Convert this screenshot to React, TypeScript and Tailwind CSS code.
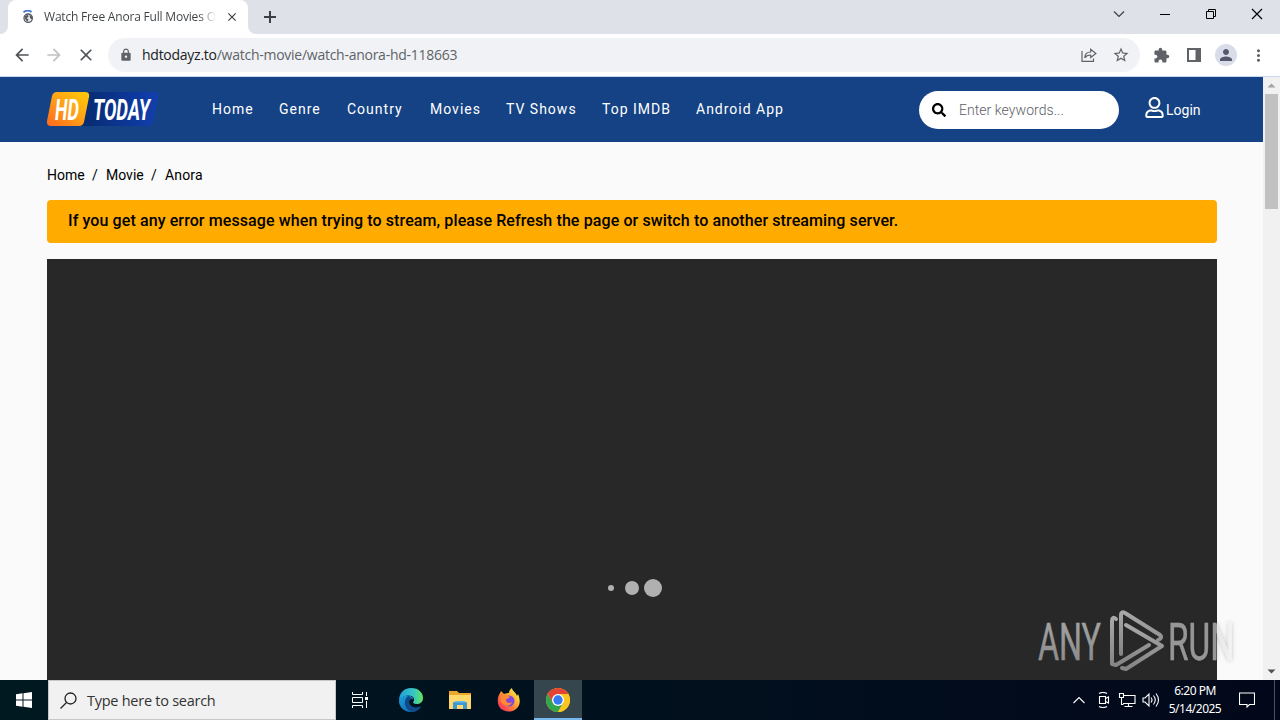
import type { ReactNode } from 'react'
import { FaRegUser, FaSearch } from 'react-icons/fa'
import { MdArrowBack, MdArrowForward, MdClose, MdExtension, MdLock, MdMoreVert, MdPerson, MdStarBorder } from 'react-icons/md'

const NAV_ITEMS = [
  { label: 'Home', width: 'w-[67px]' },
  { label: 'Genre', width: 'w-[68px]' },
  { label: 'Country', width: 'w-[83px]' },
  { label: 'Movies', width: 'w-[76px]' },
  { label: 'TV Shows', width: 'w-[96px]' },
  { label: 'Top IMDB', width: 'w-[94px]' },
  { label: 'Android App', width: 'w-[100px]' }
]

const TabStrip = () => (
  <div className="flex h-[34px] shrink-0 bg-[#dee1e8]">
    <div className="w-2 bg-white">
      <div className="h-full rounded-br-lg bg-[#dee1e8]" />
    </div>
    <div className="flex w-[240px] items-center rounded-t-lg bg-white pl-[14px]">
      <svg className="h-[14px] w-[12px] shrink-0" viewBox="0 0 12 14" fill="none">
        <path d="M1.5 2.2Q6-.8 9.5 2" stroke="#3d73cf" strokeWidth="1.8" />
        <circle cx="6.2" cy="8.2" r="4.2" fill="#e7e9ec" stroke="#565b61" strokeWidth="1.3" />
        <path d="M2.5 6.500l3.500-2 .5 2.500-2 1 2 1.500-1 2.200-2-2zM7.500 5l2.500 1.500v3L8 8z" fill="#565b61" />
      </svg>
      <div className="ml-[10px] w-[172px] bg-gradient-to-r from-[#3c4043] from-90% to-transparent bg-clip-text font-['Open_Sans',sans-serif] text-[12px] leading-[18px] tracking-[-0.190px] whitespace-nowrap text-transparent">
        Watch Free Anora Full Movies O
      </div>
      <MdClose className="ml-[9px] size-[14px] text-[#3c4043]" />
    </div>
    <div className="w-2 bg-white">
      <div className="h-full rounded-bl-lg bg-[#dee1e8]" />
    </div>
    <svg className="mt-[10px] ml-[7px] size-[14px]" viewBox="0 0 14 14" stroke="#3c4043" strokeWidth="2">
      <path d="M7 1v12M1 7h12" />
    </svg>
    <div className="ml-auto flex text-black">
      <svg className="h-[28px] w-[46px]" viewBox="0 0 46 28" fill="none" stroke="#3c4043" strokeWidth="1.2">
        <path d="M18 11.500l5 5 5-5" />
      </svg>
      <svg className="h-[28px] w-[46px]" viewBox="0 0 46 28" stroke="currentColor">
        <path d="M18 14.500h10" />
      </svg>
      <svg className="h-[28px] w-[46px]" viewBox="0 0 46 28" fill="none" stroke="currentColor">
        <path d="M18.500 11.500h7v7h-7zM20.500 11.500v-2h7v7h-2" />
      </svg>
      <svg className="h-[28px] w-[46px]" viewBox="0 0 46 28" fill="none" stroke="currentColor" strokeWidth="1.2">
        <path d="M18 9l10 10M28 9L18 19" />
      </svg>
    </div>
  </div>
)

const Toolbar = () => (
  <div className="flex h-[43px] shrink-0 items-center border-b border-[#c9d8ee] bg-white pl-3 text-[#5f6368]">
    <MdArrowBack className="size-5 text-[#505458]" />
    <MdArrowForward className="ml-3 size-5 text-[#bfc1c3]" />
    <MdClose className="ml-3 size-5 text-[#505458]" />
    <div className="ml-3 flex h-[34px] w-[1032px] items-center rounded-full bg-[#f0f2f5] pr-[10px] pl-[11px]">
      <MdLock className="size-[14px]" />
      <div className="ml-[9px] font-['Open_Sans',sans-serif] text-[14px] leading-5 tracking-[-0.260px] whitespace-nowrap">
        <span className="text-[#202124]">hdtodayz.to</span>/watch-movie/watch-anora-hd-118663
      </div>
      <svg className="ml-auto size-4" viewBox="0 0 16 16" fill="none" stroke="currentColor" strokeWidth="1.2">
        <path d="M1 4v10.400h11.500v-3" />
        <path d="M3.700 10.800c.3-4 2.500-5.800 6-5.800V2.200l5.200 4.300-5.200 4V8C7 8 5 8.800 3.700 10.800z" />
      </svg>
      <MdStarBorder className="ml-[15px] size-[18px]" />
    </div>
    <MdExtension className="ml-[13px] size-[17px]" />
    <svg className="ml-[17px] size-[14px]" viewBox="0 0 14 14">
      <path d="M0 0h14v14H0zM2 2v10h6.500V2z" fill="currentColor" fillRule="evenodd" />
    </svg>
    <div className="ml-[14px] flex size-[22px] items-center justify-center rounded-full bg-[#dadde9]">
      <MdPerson className="size-[18px] text-[#54586b]" />
    </div>
    <MdMoreVert className="ml-[12px] size-[19px]" />
  </div>
)

const SiteLogo = () => (
  <svg className="mb-px h-9 w-[112px]" viewBox="0 0 112 36">
    <defs>
      <linearGradient id="logo-orange" x1="0" y1="1" x2="1" y2="0">
        <stop offset="0" stopColor="#ff671d" />
        <stop offset="0.5" stopColor="#ffa017" />
        <stop offset="1" stopColor="#ffcd08" />
      </linearGradient>
      <linearGradient id="logo-blue">
        <stop offset="0.3" stopColor="#082b70" />
        <stop offset="0.75" stopColor="#0c389b" />
        <stop offset="1" stopColor="#123fae" />
      </linearGradient>
    </defs>
    <path d="M13 1h94q5 0 4 5l-5 25q-1 4-5 4H5z" fill="url(#logo-blue)" />
    <path d="M10 1h28q5 0 4 5l-5 25q-1 4-5 4H5q-6 0-5-5L5 5q1-4 5-4z" fill="url(#logo-orange)" />
    <g fill="#fff" fontFamily="Roboto, sans-serif" fontWeight="700" fontStyle="italic" fontSize="29">
      <text x="8" y="29" textLength="24" lengthAdjust="spacingAndGlyphs">HD</text>
      <text x="46" y="29" textLength="57" lengthAdjust="spacingAndGlyphs">TODAY</text>
    </g>
  </svg>
)

const SiteHeader = () => (
  <header className="flex h-[65px] items-center bg-[#154284] pl-[47px] text-white">
    <SiteLogo />
    <nav className="mb-[2px] ml-[53px] flex text-[14px] leading-5 tracking-[1px] whitespace-nowrap">
      {NAV_ITEMS.map((item) => (
        <a key={item.label} className={item.width}>{item.label}</a>
      ))}
    </nav>
    <div className="ml-[123px] flex h-[38px] w-[200px] items-center rounded-full bg-white pl-[13px]">
      <FaSearch className="size-[14px] text-black" />
      <span className="mt-px ml-[13px] text-[14px] leading-5 font-light tracking-[0.050px] text-[#5c6168]">Enter keywords...</span>
    </div>
    <a className="ml-[26px] flex items-center text-[14px]">
      <FaRegUser className="mb-[4px] h-[21px] w-[19px]" />
      <span className="mt-px ml-[2px] leading-5">Login</span>
    </a>
  </header>
)

const ScrollBar = () => (
  <div className="flex w-[17px] flex-col items-center bg-[#f1f1f1]">
    <svg className="h-[17px] w-[17px]" viewBox="0 0 17 17"><path d="M4.500 10.500l4-4 4 4z" fill="#a3a3a3" /></svg>
    <div className="h-[115px] w-[13px] bg-[#c1c1c1]" />
    <svg className="mt-auto h-[17px] w-[17px]" viewBox="0 0 17 17"><path d="M4.500 6.500l4 4 4-4z" fill="#505050" /></svg>
  </div>
)

const Watermark = () => (
  <svg className="absolute top-[606px] left-[1036px] h-[68px] w-[202px]" viewBox="0 0 202 68">
    <defs>
      <linearGradient id="mark" x1="0" y1="0" x2="0" y2="1">
        <stop offset="0" stopColor="#a8a8a8" />
        <stop offset="1" stopColor="#858585" />
      </linearGradient>
      <linearGradient id="mark-edge" gradientUnits="userSpaceOnUse" x1="133" y1="0" x2="197" y2="0">
        <stop offset="0.75" stopColor="#969696" />
        <stop offset="0.751" stopColor="#e6e6e6" />
        <stop offset="1" stopColor="#f4f4f4" />
      </linearGradient>
      <filter id="mark-shadow"><feDropShadow dx="0" dy="0" stdDeviation="2" floodOpacity="0.25" /></filter>
    </defs>
    <g fontFamily="Roboto, sans-serif" fontSize="51" strokeWidth="0.5">
      <text x="2" y="54" fill="url(#mark)" stroke="url(#mark)" textLength="63" lengthAdjust="spacingAndGlyphs">ANY</text>
      <text x="132" y="54" fill="url(#mark-edge)" stroke="url(#mark-edge)" filter="url(#mark-shadow)" textLength="66" lengthAdjust="spacingAndGlyphs">RUN</text>
    </g>
    <g fill="none" stroke="url(#mark)" strokeWidth="4" strokeLinejoin="round" strokeLinecap="round">
      <path d="M80 13q-4-3-4 2v43l4 1 33-20" />
      <path d="M85 48V9q0-4 4-2l35 22q3 3-2 5" />
      <path d="M90 19l36 21L90 63l-4-1" />
    </g>
  </svg>
)

const TaskButton = ({ active = false, children }: { active?: boolean; children: ReactNode }) => (
  <div className={active ? 'flex w-12 items-center justify-center border-b-2 border-[#76b9ed] bg-[#35464f] pt-[2px]' : 'flex w-12 items-center justify-center'}>
    {children}
  </div>
)

const EdgeIcon = () => (
  <svg className="mr-[-6px] size-6" viewBox="0 0 24 24">
    <defs>
      <linearGradient id="edge-top">
        <stop offset="0" stopColor="#219fdb" />
        <stop offset="0.6" stopColor="#36c6c5" />
        <stop offset="1" stopColor="#66e45b" />
      </linearGradient>
      <linearGradient id="edge-body" x1="0" y1="0" x2="1" y2="1">
        <stop offset="0" stopColor="#1aa2dc" />
        <stop offset="1" stopColor="#1259a7" />
      </linearGradient>
    </defs>
    <path d="M0 13C0 5 5 0 12 0c8 0 12 5 12 10 0 4-3 6-6.500 6-3 0-4-1-3-2.500 2-3-1-6-5-6C5 7.500 1 10 0 13z" fill="url(#edge-top)" />
    <path d="M0 13c1-4 5-5.500 9-5.500 3 0 5 2 5.500 4-3-1-4.500 0-4.500 2.500 0 4 5 7 10 5.500l2-1C20 22 16 24 12 24 5 24 0 19 0 13z" fill="url(#edge-body)" />
    <path d="M9 8c-5 4-4 13 3.500 16 4 0 7.500-2 9.500-5.500-5 2.500-12 .5-12-4.500 0-2 1-3 3-3C12 9 10.500 8 9 8z" fill="#114a8b" />
  </svg>
)

const FolderIcon = () => (
  <svg className="mr-[-8px] h-5 w-[22px]" viewBox="0 0 22 20">
    <path d="M0 1h8l2 2h12v16H0z" fill="#e9a72c" />
    <path d="M0 5h22v14H0z" fill="#ffd76b" />
    <path d="M4 19v-6q0-1 1-1h12q1 0 1 1v6h-4v-4H8v4z" fill="#3c99d6" />
    <path d="M6 11h10v1.500H6z" fill="#6bb9e6" />
  </svg>
)

const FirefoxIcon = () => (
  <svg className="mr-[-10px] size-6" viewBox="0 0 24 24">
    <defs>
      <linearGradient id="fox" x1="1" y1="0" x2="0" y2="1">
        <stop offset="0.15" stopColor="#ffe642" />
        <stop offset="0.5" stopColor="#ff9233" />
        <stop offset="0.85" stopColor="#f83a59" />
      </linearGradient>
    </defs>
    <path d="M3 5l1-2 3 3c2-1 4-1 5-1 0-2 1-4 3-5 0 3 4 4 5 8l1-2c3 7 2 12-2 15-5 4-12 3-16-1C0 16 0 9 3 5z" fill="url(#fox)" />
    <circle cx="12" cy="13" r="5.500" fill="#8248d9" />
    <path d="M4 9c3-3 6-2 9 0-1 2-4 1-4 3 0 3 4 4 6 2-1 4-6 5-9 2-2-2-3-4-2-7z" fill="#ff8a32" />
  </svg>
)

const ChromeIcon = () => (
  <svg className="size-6" viewBox="0 0 24 24">
    <circle cx="12" cy="12" r="12" fill="#fbc51d" />
    <path d="M1.610 6A12 12 0 0 1 22.390 6H12L6.800 15z" fill="#e44435" />
    <path d="M1.610 6A12 12 0 0 0 12 24L17.200 15H6.800z" fill="#31a650" />
    <path d="M22.390 6A12 12 0 0 1 12 24L17.200 15V6z" fill="#fbc51d" />
    <circle cx="12" cy="12" r="6" fill="#fff" />
    <circle cx="12" cy="12" r="4.700" fill="#347cf0" />
  </svg>
)

const Taskbar = () => (
  <footer className="flex h-10 shrink-0 bg-gradient-to-r from-[#001820] to-[#02081a] font-['Open_Sans',sans-serif] text-white">
    <div className="flex w-12 items-center justify-center">
      <svg className="size-4" viewBox="0 0 16 16" fill="#fff">
        <path d="M0 2.200l6.500-.9v6.200H0zM7.500 1.200L16 0v7.500H7.500zM0 8.500h6.500v6.200L0 13.800zM7.500 8.500H16V16l-8.500-1.200z" />
      </svg>
    </div>
    <div className="flex w-[288px] items-center border border-[#c7c7c7] bg-[#f1f1f1] pl-[11px] text-[#333]">
      <svg className="size-[17px]" viewBox="0 0 17 17" fill="none" stroke="#222" strokeWidth="1.300">
        <circle cx="10.500" cy="6.500" r="5.500" />
        <path d="M6.500 10.500L.5 16.500" />
      </svg>
      <span className="mt-px ml-[10px] text-[14.500px] leading-5 tracking-[-0.260px]">Type here to search</span>
    </div>
    <TaskButton>
      <svg className="size-4" viewBox="0 0 16 16" fill="none" stroke="#fff">
        <path d="M.500 0v2.500h10V0M.500 16v-2.500h10V16M.500 5.500h10v5H.500zM14.500 0v4M14.500 9v7" />
        <path d="M13 5h3v3h-3z" fill="#fff" stroke="none" />
      </svg>
    </TaskButton>
    <TaskButton><EdgeIcon /></TaskButton>
    <TaskButton><FolderIcon /></TaskButton>
    <TaskButton><FirefoxIcon /></TaskButton>
    <div className="w-[6px]" />
    <TaskButton active><ChromeIcon /></TaskButton>
    <div className="ml-auto flex items-center">
      <svg className="h-4 w-[88px]" viewBox="0 0 88 16" fill="none" stroke="#fff" strokeWidth="1.100">
        <path d="M.5 11L6 5.500l5.500 5.500" />
        <path d="M26.500 4.500h6v7h-6zM32.500 6.500l3-1.500v6l-3-1.500M26 1.500q4-2 8 0M26 14.500q4 2 8 0" />
        <path d="M50 3.500h12v8H50M55.500 11.500v3M51.500 14.500h8M46.500 1.500h4v4h-4zM48.500 5.500v7h2" />
        <path d="M70 6h2l4-4v12l-4-4h-2zM78 5.500q2 2.500 0 5M80.500 3.500q3.500 4.500 0 9M83 1.500q5 6.500 0 13" />
      </svg>
      <div className="ml-[7px] w-[54px] text-center font-['Noto_Sans',sans-serif] text-[12px] leading-[18px] tracking-[-0.500px] whitespace-nowrap">
        <div>6:20 PM</div>
        <div>5/14/2025</div>
      </div>
      <svg className="mr-[19px] ml-[17px] size-4" viewBox="0 0 16 16" fill="none" stroke="#fff" strokeWidth="1.100">
        <path d="M.500 1h15v11.500h-5L8 15v-2.500H.500z" />
      </svg>
      <div className="h-10 w-[6px] border-l border-[#4a5260]" />
    </div>
  </footer>
)

export default function App() {
  return (
    <div className="relative flex h-[720px] w-[1280px] flex-col overflow-hidden bg-white font-[Roboto,sans-serif]">
      <TabStrip />
      <Toolbar />
      <div className="flex min-h-0 flex-1">
        <main className="flex min-w-0 flex-1 flex-col overflow-hidden bg-[#fafafa]">
          <SiteHeader />
          <div className="mt-[23px] ml-[47px] flex text-[14px] leading-5 text-black">
            <span className="w-[45px]">Home</span>
            <span className="w-[14px]">/</span>
            <span className="w-[45px]">Movie</span>
            <span className="w-[14px]">/</span>
            <span className="tracking-[0.150px]">Anora</span>
          </div>
          <div className="mt-[15px] ml-[47px] flex h-[43px] w-[1170px] shrink-0 items-center rounded-[4px] bg-[#ffab00] pb-[2px] pl-[21px] text-[16px] font-medium tracking-[0.105px] text-black">
            If you get any error message when trying to stream, please Refresh the page or switch to another streaming server.
          </div>
          <div className="mt-4 ml-[47px] flex w-[1170px] flex-1 justify-center bg-[#282828] pt-[319px] pl-[6px]">
            <div className="flex h-5 items-center">
              <div className="size-[6px] rounded-full bg-[#b0b0b0]" />
              <div className="ml-[11px] size-[14px] rounded-full bg-[#b0b0b0]" />
              <div className="ml-[5px] size-[18px] rounded-full bg-[#b0b0b0]" />
            </div>
          </div>
        </main>
        <ScrollBar />
      </div>
      <Taskbar />
      <Watermark />
    </div>
  )
}
